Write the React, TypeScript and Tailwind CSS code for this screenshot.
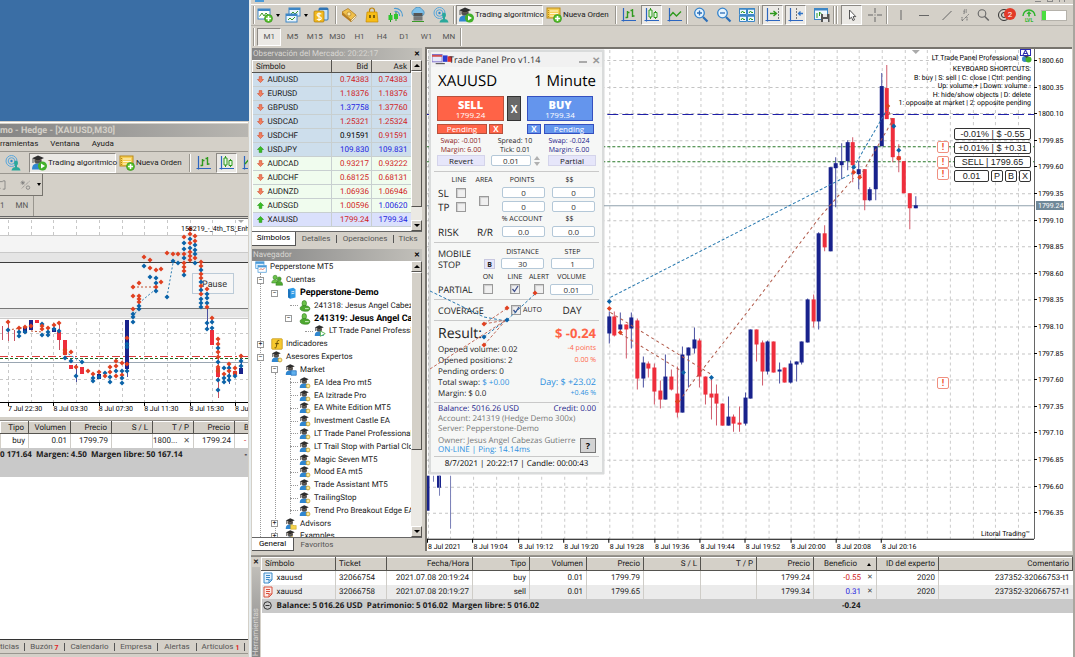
import type { ReactNode } from 'react'
import clsx from 'clsx'

type Candle = [top: number, bottom: number, high: number, low: number, up: 0 | 1]

const MAIN_CANDLES: Candle[] = [
  [316, 333, 311, 343, 1], [316, 335, 311, 336, 0], [324, 329, 312, 330, 1], [324, 329, 324, 358, 0],
  [317, 328, 312, 348, 1], [320, 378, 318, 389, 0], [362, 378, 356, 387, 1], [363, 368, 361, 377, 0],
  [367, 391, 363, 404, 0], [390, 399, 380, 408, 0], [376, 399, 354, 399, 1], [376, 389, 369, 390, 0],
  [393, 412, 366, 417, 0], [354, 412, 346, 412, 1], [347, 355, 347, 387, 1], [339, 348, 327, 353, 1],
  [340, 376, 338, 387, 0], [376, 394, 376, 404, 0], [393, 397, 378, 419, 0], [393, 403, 384, 425, 0],
  [403, 425, 403, 425, 0], [416, 425, 396, 425, 1], [416, 423, 414, 431, 0], [422, 424, 406, 431, 0],
  [397, 423, 392, 425, 1], [329, 398, 329, 398, 1], [329, 344, 329, 361, 0], [342, 371, 340, 385, 0],
  [341, 371, 340, 374, 1], [341, 372, 341, 372, 0], [369, 371, 362, 383, 1], [367, 382, 367, 382, 0],
  [363, 382, 360, 383, 1], [361, 364, 361, 381, 1], [341, 362, 341, 364, 1], [299, 342, 298, 342, 1],
  [299, 321, 294, 327, 0], [233, 321, 232, 329, 1], [233, 247, 225, 251, 0], [167, 251, 167, 251, 1],
  [163, 168, 157, 207, 1], [161, 165, 143, 179, 1], [142, 161, 140, 170, 1], [142, 165, 137, 182, 0],
  [169, 174, 161, 189, 1], [169, 200, 169, 210, 0], [189, 200, 187, 201, 1], [146, 189, 146, 200, 1],
  [86, 146, 73, 146, 1], [88, 119, 65, 119, 0], [118, 157, 118, 162, 0], [156, 160, 144, 172, 0],
  [161, 193, 161, 193, 0], [193, 208, 193, 229, 0], [205, 208, 196, 208, 1],
]

// [x, y, 'r' | 'b']
type Mark = [number, number, string]

const MAIN_MARKS: Mark[] = [
  [610, 301, 'b'], [610, 308, 'r'], [621, 332, 'r'], [684, 372, 'b'], [712, 377, 'b'], [678, 401, 'r'],
  [854, 167, 'b'], [854, 172, 'r'], [860, 177, 'r'], [888, 106, 'r'], [894, 126, 'b'], [899, 150, 'b'], [899, 158, 'r'],
]

// column x, then "<colour><y>" marks
const BACK_MARKS: [number, string][] = [
  [8, 'r322 b330'], [19, 'r328 b332 b336'], [25, 'r327 b332'], [31, 'r326'], [42, 'b324 r329 b335 r326'],
  [48, 'r328 b332 b335'], [54, 'r325 b329'], [59, 'r323 b331'], [65, 'r350 b358 r353'], [71, 'r352 b361'],
  [76, 'r367 b376'], [82, 'b362'], [88, 'r371'], [93, 'r374 b378 b381'], [99, 'r372 b377'], [105, 'b373 r376'],
  [110, 'r367 r372 b377 b382'], [116, 'r361 r366 b371 r376'], [122, 'r363 b371 r375 b378 b383'],
  [127, 'r338 b344 b347 r364 b371'], [133, 'r287 r296 r309 b314 b317 b322'],
  [139, 'r283 r296 r299 r302 b306 b309'], [144, 'r257 b266'], [150, 'r260 r268 b277'],
  [156, 'r270 b278 b283 r287 b291'], [161, 'r269 r282'], [167, 'r253 b297'], [173, 'r254 b261'], [178, 'r254 b263'],
  [184, 'r237 b243 b249 r254 b258 r263 r267 r271 b275'],
  [190, 'r229 r234 b239 r243 b248 r252 r256 r260'],
  [195, 'r236 r241 b245 b250 b254 r258 b263'],
  [201, 'r262 r266 b270 r274 r278 b282 r286 b290 r294 b299 b303 b307'],
  [207, 'r289 b294 b298 b303 r307 b323 b329'], [212, 'r318 b322 b328'],
  [218, 'r339 r344 b348 r352 r357 b362 r367 r371 b380 b390'], [224, 'b368 r374 b378 b382'],
  [229, 'r364 b368 r371 b376 b380'], [235, 'r368 r373 b376'], [241, 'r356 b361 b366'],
]

const BACK_BODIES: [number, number, number, 0 | 1][] = [
  [25, 327, 333, 1], [31, 320, 330, 1], [37, 320, 323, 0], [54, 328, 332, 1], [59, 332, 340, 0], [65, 340, 355, 0],
  [71, 365, 369, 0], [82, 367, 374, 0], [99, 374, 379, 1], [127, 320, 369, 1], [212, 330, 345, 0],
  [218, 368, 377, 0], [235, 371, 375, 0], [241, 368, 374, 1],
]

const BACK_WICKS: [number, number, number, 0 | 1][] = [
  [2, 326, 340, 0], [8, 320, 341, 0], [14, 330, 341, 0], [59, 322, 350, 0], [76, 364, 382, 1], [127, 320, 377, 1],
  [207, 306, 328, 1], [218, 338, 398, 0], [229, 363, 384, 1], [241, 354, 374, 1],
]

const QUOTES = [
  ['AUDUSD', '0.74383', '0.74383', 'd', 'r', 'r'],
  ['EURUSD', '1.18376', '1.18376', 'd', 'r', 'r'],
  ['GBPUSD', '1.37758', '1.37760', 'd', 'b', 'r'],
  ['USDCAD', '1.25321', '1.25324', 'd', 'r', 'r'],
  ['USDCHF', '0.91591', '0.91591', 'd', 'k', 'r'],
  ['USDJPY', '109.830', '109.831', 'u', 'b', 'b'],
  ['AUDCAD', '0.93217', '0.93222', 'd', 'r', 'r'],
  ['AUDCHF', '0.68125', '0.68131', 'd', 'r', 'r'],
  ['AUDNZD', '1.06936', '1.06946', 'd', 'r', 'r'],
  ['AUDSGD', '1.00596', '1.00620', 'u', 'r', 'b'],
  ['XAUUSD', '1799.24', '1799.34', 'u', 'r', 'b'],
]

const QUOTE_COLOR: Record<string, string> = {
  r: 'text-[#d01c24]',
  b: 'text-[#1c24e0]',
  k: 'text-black',
}

type TreeItem = { label: string; depth: number; icon: string; box?: '+' | '-'; bold?: boolean }

const TREE: TreeItem[] = [
  { label: 'Pepperstone MT5', depth: 0, icon: 'app' },
  { label: 'Cuentas', depth: 1, icon: 'users', box: '-' },
  { label: 'Pepperstone-Demo', depth: 2, icon: 'server', box: '-', bold: true },
  { label: '241318: Jesus Angel Cabezas', depth: 3, icon: 'user' },
  { label: '241319: Jesus Angel Cabezas', depth: 3, icon: 'user', box: '-', bold: true },
  { label: 'LT Trade Panel Professional', depth: 4, icon: 'expertRun' },
  { label: 'Indicadores', depth: 1, icon: 'fx', box: '+' },
  { label: 'Asesores Expertos', depth: 1, icon: 'expert', box: '-' },
  { label: 'Market', depth: 2, icon: 'expertBag', box: '-' },
  { label: 'EA Idea Pro mt5', depth: 3, icon: 'expert' },
  { label: 'EA Izitrade Pro', depth: 3, icon: 'expert' },
  { label: 'EA White Edition MT5', depth: 3, icon: 'expert' },
  { label: 'Investment Castle EA', depth: 3, icon: 'expert' },
  { label: 'LT Trade Panel Professional', depth: 3, icon: 'expert' },
  { label: 'LT Trail Stop with Partial Close', depth: 3, icon: 'expert' },
  { label: 'Magic Seven MT5', depth: 3, icon: 'expert' },
  { label: 'Mood EA mt5', depth: 3, icon: 'expert' },
  { label: 'Trade Assistant MT5', depth: 3, icon: 'expert' },
  { label: 'TrailingStop', depth: 3, icon: 'expert' },
  { label: 'Trend Pro Breakout Edge EA', depth: 3, icon: 'expert' },
  { label: 'Advisors', depth: 2, icon: 'expertFolder', box: '+' },
  { label: 'Examples', depth: 2, icon: 'expertFolder', box: '+' },
]

const DEPTH_PAD = ['pl-[3px]', 'pl-[5px]', 'pl-[19px]', 'pl-[33px]', 'pl-[48px]']

const TIMEFRAMES = ['M1', 'M5', 'M15', 'M30', 'H1', 'H4', 'D1', 'W1', 'MN']
const PRICES = Array.from({ length: 18 }, (_, i) => (1800.6 - i * 0.25).toFixed(2))
const TIMES = [
  '8 Jul 2021', '8 Jul 19:04', '8 Jul 19:12', '8 Jul 19:20', '8 Jul 19:28', '8 Jul 19:36',
  '8 Jul 19:44', '8 Jul 19:52', '8 Jul 20:00', '8 Jul 20:08', '8 Jul 20:16',
]

const RAISED = 'border-r border-b border-r-[#55534f] border-b-[#55534f] border-t border-l border-t-white border-l-white bg-[#d4d0c8]'
const PRESSED = 'border border-[#8c8984] border-r-white border-b-white bg-[#ebe9e5]'

/* ---------- icons ---------- */

function Expert({ badge }: { badge?: ReactNode }) {
  return (
    <>
      <circle cx="7" cy="6" r="3.4" fill="#b08868" />
      <path d="M1 14.500c0-4.500 2-6 6-6s6 1.500 6 6z" fill="#2f86d0" />
      <path d="M1 3.200 7 .4l6 2.600-6 2.800z" fill="#2e2e2e" />
      <path d="M3.500 4.300v3c2 1.200 5 1.200 7 0v-3L7 6z" fill="#505050" />
      <path d="M2 4v4" stroke="#2e2e2e" strokeWidth=".8" />
      {badge}
    </>
  )
}

const ICONS: Record<string, ReactNode> = {
  newChart: (
    <>
      <rect x="1" y="2" width="12" height="10" fill="#fff" stroke="#3d86c6" />
      <path d="M1 2h12v2H1z" fill="#3d86c6" />
      <path d="M2.500 9.500 5 6l2 3 2-3 2 2" fill="none" stroke="#3a9a28" />
      <circle cx="11.500" cy="11.500" r="4" fill="#57c02c" stroke="#2f8a16" strokeWidth=".6" />
      <path d="M11.500 9v5M9 11.500h5" stroke="#fff" strokeWidth="1.600" />
    </>
  ),
  profiles: (
    <>
      <rect x="4" y="1" width="11" height="8" fill="#eaf5fd" stroke="#3d86c6" />
      <path d="M4 1h11v2H4z" fill="#3d86c6" />
      <path d="m6 7 2-2 2 2 3-3" fill="none" stroke="#3a9a28" />
      <rect x="1" y="7" width="11" height="8" fill="#eaf5fd" stroke="#3d86c6" />
      <path d="M1 7h11v2H1z" fill="#3d86c6" />
      <path d="m3 13 2-2 2 2 3-3" fill="none" stroke="#3a9a28" />
    </>
  ),
  money: (
    <>
      <rect x="6" y="1" width="9" height="12" rx="1" fill="#c4e2f8" stroke="#2f74b5" />
      <path d="M6 1h9v2H6z" fill="#2f74b5" />
      <rect x="1" y="4" width="10" height="11" rx="1" fill="#f1b91f" stroke="#a9780c" strokeWidth=".7" />
      <path d="M8.300 7.300C7.500 6.200 4 6.200 4 8s4.300 1.400 4.300 3.300S4.600 13 3.800 12M6 5.500v8.500" fill="none" stroke="#fff" strokeWidth="1.100" />
    </>
  ),
  book: (
    <>
      <path d="m1 5 6-3.500L15 8l-5 5z" fill="#f0c04a" stroke="#a3701a" strokeWidth=".7" />
      <path d="m1 5v3l9 7v-2z" fill="#b97d1e" />
      <path d="m10 13 5-5v2l-5 5z" fill="#fff3cf" stroke="#a3701a" strokeWidth=".5" />
      <circle cx="8" cy="7" r="2" fill="#fbe7a6" stroke="#a3701a" strokeWidth=".6" />
    </>
  ),
  bag: (
    <>
      <path d="M5.500 6V3.500a2.500 2.500 0 0 1 5 0V6" fill="none" stroke="#bd8407" strokeWidth="1.200" />
      <path d="M3 5h10l1 10H2z" fill="#f7bd16" stroke="#c58b08" strokeWidth=".7" />
      <path d="M6 8v3M10 8v3" stroke="#4b3a08" strokeWidth="1.400" />
    </>
  ),
  signals: (
    <>
      <path d="M3.500 6v9M9 5v9" stroke="#1c9a1c" />
      <rect x="1.500" y="8" width="4" height="5" fill="#2fc52f" />
      <rect x="7" y="7" width="4" height="5" fill="#2fc52f" />
      <path d="M7.500 4.500a4 4 0 0 1 5 4.500M7 1.500a7 7 0 0 1 8.300 8" fill="none" stroke="#4d9bd0" strokeWidth="1.100" />
    </>
  ),
  vps: (
    <>
      <path d="M4 9a3.500 3.500 0 0 1 0-6.500 4.500 4.500 0 0 1 8 0A3.500 3.500 0 0 1 12 9z" fill="#7cc0ea" stroke="#3d86b6" strokeWidth=".7" />
      <rect x="3.500" y="6" width="9" height="3.500" fill="#555" />
      <rect x="3.500" y="10" width="9" height="3.500" fill="#777" />
      <path d="M2 14.500h12" stroke="#3a9a28" />
    </>
  ),
  cast: (
    <>
      <circle cx="6.500" cy="6" r="5.500" fill="none" stroke="#58a6dc" />
      <circle cx="6.500" cy="6" r="3.300" fill="none" stroke="#58a6dc" />
      <circle cx="6.500" cy="6" r="1.200" fill="#2f86c8" />
      <ellipse cx="11" cy="8" rx="2" ry="2.600" fill="#2aa89b" />
      <path d="M6.500 15.500c.3-2.500 2-3.500 4.500-3.500s4.200 1 4.500 3.500z" fill="#2aa89b" />
      <path d="M10 10h2v3h-2z" fill="#2aa89b" />
    </>
  ),
  expertRun: <Expert badge={<path d="M8.500 8 15 11.500 8.500 15z" fill="#fff" stroke="#3aa52a" />} />,
  expertPlay: (
    <Expert
      badge={
        <>
          <circle cx="11.500" cy="11" r="4.500" fill="#43b02a" />
          <path d="m10 8.500 4 2.500-4 2.500z" fill="#fff" />
        </>
      }
    />
  ),
  expert: <Expert badge={<circle cx="12" cy="12" r="2.600" fill="#fbe99a" stroke="#c59a1d" />} />,
  expertBag: <Expert badge={<path d="M8 9h7v6H8z" fill="#5fb0ee" stroke="#2a6fb8" />} />,
  expertFolder: <Expert badge={<path d="M7.500 9h3l1 1H15v5H7.500z" fill="#f7d34a" stroke="#c39a18" strokeWidth=".6" />} />,
  order: (
    <>
      <rect x="1" y="1" width="13" height="10" fill="#f7cf55" stroke="#b98a18" />
      <path d="M4 4h8M4 6.500h8M4 9h5" stroke="#fff7d8" />
      <path d="M2.500 3v7" stroke="#b98a18" strokeDasharray="1 1" />
      <circle cx="11.500" cy="11.500" r="4" fill="#57c02c" stroke="#2f8a16" strokeWidth=".6" />
      <path d="M11.500 9v5M9 11.500h5" stroke="#fff" strokeWidth="1.600" />
    </>
  ),
  bars: (
    <>
      <path d="M2.500 1v13.500M.5 13.500H15" stroke="#2c66c0" strokeWidth="1.200" />
      <path d="M6.500 4v7M4.500 10.500h2M6.500 5.500h2M11.500 2v8M9.500 3.500h2M11.500 9h2" stroke="#2f9a1e" strokeWidth="1.400" />
    </>
  ),
  candles: (
    <>
      <path d="M2.500 1v13.500M.5 13.500H15" stroke="#2c66c0" strokeWidth="1.200" />
      <path d="M6.500 1v11M11.500 4v8" stroke="#2f9a1e" />
      <path d="M5 3h3v7H5zM10 5.500h3v5h-3z" fill="#e9fbe4" stroke="#2f9a1e" />
    </>
  ),
  line: (
    <>
      <path d="M2.500 1v13.500M.5 13.500H15" stroke="#2c66c0" strokeWidth="1.200" />
      <path d="m3 9 3-3.500L9.500 9 14 4.500" fill="none" stroke="#2f9a1e" strokeWidth="1.400" />
    </>
  ),
  zoomIn: (
    <>
      <path d="m10 10 4.500 4.500" stroke="#2d6fb8" strokeWidth="2.200" />
      <circle cx="6.500" cy="6" r="4.800" fill="#e6f4fe" stroke="#3583cc" strokeWidth="1.300" />
      <path d="M6.500 3.500v5M4 6h5" stroke="#2d6fb8" strokeWidth="1.300" />
    </>
  ),
  zoomOut: (
    <>
      <path d="m10 10 4.500 4.500" stroke="#2d6fb8" strokeWidth="2.200" />
      <circle cx="6.500" cy="6" r="4.800" fill="#e6f4fe" stroke="#3583cc" strokeWidth="1.300" />
      <path d="M4 6h5" stroke="#2d6fb8" strokeWidth="1.300" />
    </>
  ),
  tile: (
    <>
      <path d="M.5 1.500h7v6h-7zM8.500 1.500h7v6h-7zM.5 8.500h7v6h-7zM8.500 8.500h7v6h-7z" fill="#eef8ff" stroke="#3d86c6" />
      <path d="M0 2h16M0 9h16" stroke="#3d86c6" strokeWidth="1.400" />
      <path d="m2 6 1.500-2L5 6l1-1M10 6l1.500-2L13 6l1-1M2 13l1.500-2L5 13l1-1M10 13l1.500-2 1.500 2 1-1" fill="none" stroke="#2f9a1e" />
    </>
  ),
  autoScroll: (
    <>
      <path d="M2.500 1v13.500M.5 13.500H15" stroke="#2c66c0" strokeWidth="1.200" />
      <path d="M13.500 1v11" stroke="#777" strokeDasharray="2 1" />
      <path d="M5 6.500h6M8.500 4l3 2.500-3 2.500" fill="none" stroke="#2f9a1e" strokeWidth="1.400" />
    </>
  ),
  shift: (
    <>
      <path d="M2.500 1v13.500M.5 13.500H15" stroke="#2c66c0" strokeWidth="1.200" />
      <path d="M8.500 1v11" stroke="#777" strokeDasharray="2 1" />
      <path d="M15 6.500h-4M12.500 4.500l-2 2 2 2" fill="none" stroke="#2f74c8" strokeWidth="1.300" />
    </>
  ),
  template: (
    <>
      <rect x=".5" y="1.500" width="13" height="11" fill="#eef8ff" stroke="#3d86c6" />
      <path d="M0 2.500h14" stroke="#3d86c6" strokeWidth="2" />
      <path d="M3 11V6M5.500 9V5l2 2" fill="none" stroke="#2f9a1e" />
      <rect x="7" y="7" width="8.500" height="8" fill="#555" />
      <path d="M9 7h4v3H9zM9 12h5v3H9z" fill="#e5e5e5" />
    </>
  ),
  cursor: <path d="M5.500 3v9l2-1.800 1.400 3.300 1.600-.7-1.400-3.200h2.700z" fill="#fff" stroke="#444" strokeWidth=".9" />,
  cross: <path d="M8 1v5M8 10v5M1 8h5M10 8h5M7.500 8h1" stroke="#666" />,
  vline: <path d="M8 3v10" stroke="#666" />,
  hline: <path d="M3 8.500h10" stroke="#666" />,
  trend: <path d="m3.500 13 9-9" stroke="#666" />,
  fibo: <path d="M6 7V3h3M6 5h3M4 14l7-7M4 10v4M9 10v4" fill="none" stroke="#777" strokeDasharray="1.500 .5" />,
  search: (
    <>
      <circle cx="7" cy="6.500" r="3.800" fill="none" stroke="#666" strokeWidth="1.100" />
      <path d="m9.800 9.500 4 4" stroke="#666" strokeWidth="1.500" />
    </>
  ),
  shapes: (
    <>
      <path d="M5 2v6M2 5h6M3 3l4 4M7 3 3 7" stroke="#777" strokeWidth=".9" />
      <path d="M14 3 3 13" stroke="#777" strokeDasharray="1.500 1" />
      <circle cx="12" cy="11.500" r="2.300" fill="none" stroke="#777" />
    </>
  ),
  text: <path d="M0 3.500h9M4.500 3.500v9M3 12.500h3M12 2.500v11M9 2.500h3M9 13.500h3" fill="none" stroke="#777" />,
  app: (
    <>
      <rect x="1" y="1" width="11" height="9" fill="#e4f2fd" stroke="#4a9ad8" />
      <path d="M1 2.500h11" stroke="#4a9ad8" strokeWidth="2.500" />
      <rect x="4" y="6" width="11" height="9" fill="#fff" stroke="#4a9ad8" />
      <path d="m6 12 2-2 2 2 3-3" fill="none" stroke="#d8503c" />
      <path d="M4 7.500h11" stroke="#4a9ad8" strokeWidth="2" />
    </>
  ),
  users: (
    <>
      <circle cx="5.500" cy="4.500" r="2.800" fill="#6cc24a" stroke="#2f7d1c" strokeWidth=".7" />
      <path d="M1 12c0-3 2-4.500 4.500-4.500S10 9 10 12z" fill="#6cc24a" stroke="#2f7d1c" strokeWidth=".7" />
      <circle cx="11" cy="6.500" r="2.600" fill="#4da82f" stroke="#2f7d1c" strokeWidth=".7" />
      <path d="M6.500 15c0-4 2-5.500 4.500-5.500s4.500 1.500 4.500 5.500z" fill="#4da82f" stroke="#2f7d1c" strokeWidth=".7" />
    </>
  ),
  user: (
    <>
      <ellipse cx="7" cy="4.500" rx="3" ry="3.800" fill="#6cc24a" stroke="#2f7d1c" strokeWidth=".8" />
      <path d="M1.500 11c0-2.500 2.500-3.500 5.500-3.500 4 0 7.500 1 7.500 4s-3 3.500-6.500 3.500-6.500-1-6.500-4z" fill="#4da82f" stroke="#2f7d1c" strokeWidth=".8" />
      <path d="M8 11.500h5" stroke="#d8f5cc" strokeWidth="1.200" />
    </>
  ),
  server: (
    <>
      <path d="M4 2.500 11 1l3 2v11l-7 1.500-3-2z" fill="#2f9be6" />
      <path d="M4 2.500 7 4.500V15.500l-3-2z" fill="#1c74bd" />
      <path d="M8.500 6.500l4-.8M8.500 9l4-.8" stroke="#fff" />
    </>
  ),
  fx: (
    <>
      <rect x="1" y="1" width="14" height="14" rx="1" fill="#f7c92f" stroke="#c39416" />
      <path d="M11 3.500c-2-.8-2.600.5-2.900 2.500l-.8 5c-.3 2-1 2.500-2.500 2M5.500 7.500h5" fill="none" stroke="#5a4305" strokeWidth="1.200" />
    </>
  ),
}

function Icon({ name, size = 16, className }: { name: string; size?: number; className?: string }) {
  return (
    <svg viewBox="0 0 16 16" width={size} height={size} className={clsx('shrink-0', className)} aria-hidden="true">
      {ICONS[name]}
    </svg>
  )
}

function Arrow({ up }: { up: boolean }) {
  return (
    <svg viewBox="0 0 8 8" className="size-[7px] shrink-0" aria-hidden="true">
      {up ? (
        <path d="M4 .5 7.500 4H5.500v3.300h-3V4H.5z" fill="#35c020" stroke="#1c8a0e" strokeWidth=".6" />
      ) : (
        <path d="M4 7.500.5 4h2V.7h3V4h2z" fill="#f08060" stroke="#d04020" strokeWidth=".6" />
      )}
    </svg>
  )
}

/* ---------- toolbar parts ---------- */

function Tool({ name, label, pressed }: { name: string; label: string; pressed?: boolean }) {
  return (
    <button
      type="button"
      aria-label={label}
      className={clsx('mx-px flex h-[20px] w-[21px] shrink-0 items-center justify-center', pressed && PRESSED)}
    >
      <Icon name={name} />
    </button>
  )
}

function Sep({ className }: { className?: string }) {
  return <span className={clsx('h-[18px] w-[2px] shrink-0 border-l border-r border-l-[#99968f] border-r-white', className)} />
}

function Caret() {
  return <span className="mx-[3px] border-x-2 border-t-[3px] border-x-transparent border-t-black" />
}

function AlgoButton() {
  return (
    <button type="button" className={clsx('flex h-[20px] w-[87px] shrink-0 items-center gap-px pl-px whitespace-nowrap', PRESSED)}>
      <Icon name="expertPlay" />
      Trading algorítmico
    </button>
  )
}

function OrderButton() {
  return (
    <button type="button" className="flex h-[20px] w-[68px] shrink-0 items-center gap-px pl-[3px] whitespace-nowrap">
      <Icon name="order" />
      Nueva Orden
    </button>
  )
}

/* ---------- charts ---------- */

function Marks({ items }: { items: Mark[] }) {
  return (
    <g>
      {items.map(([x, y, c], i) => (
        <path
          key={i}
          d={`M${x} ${y - 2.5}l2.500 2.500-2.500 2.500-2.500-2.500z`}
          fill={c === 'r' ? '#e04020' : '#0a62a8'}
        />
      ))}
    </g>
  )
}

function BackChart() {
  const marks = BACK_MARKS.flatMap(([x, s]) => s.split(' ').map((m): Mark => [x, Number(m.slice(1)), m[0]]))
  const gridX = Array.from({ length: 11 }, (_, i) => Math.round(8 + i * 22.7) + 0.5)
  return (
    <svg viewBox="0 219 248 198" preserveAspectRatio="xMinYMin slice" className="block h-[198px] w-full shrink-0 bg-white font-['Roboto',sans-serif]">
      {gridX.map((x) => (
        <path key={x} d={`M${x} 220V402`} stroke="#c8c8c8" strokeDasharray="3 3" />
      ))}
      <path d="M0 333.500h248M0 379.500h248" stroke="#c8c8c8" strokeDasharray="3 3" />
      <rect y="235" width="248" height="83" fill="#f4f4f4" />
      <rect y="252" width="248" height="10" fill="#e5e5e5" />
      <rect y="309" width="248" height="8" fill="#e5e5e5" />
      <path d="M0 235.500h248M0 252.500h248M0 318.500h248" stroke="#c9c9c9" />
      <path d="M0 262.500h248" stroke="#3c3c3c" />
      <path d="M0 308.500h248" stroke="#777" />
      <path d="M0 362.500h248" stroke="#9aa6b2" />
      <path d="M0 356.500h248" stroke="#d83a3a" strokeDasharray="8 3 2 3" />
      <path d="M0 358.500h248" stroke="#1a6a1a" strokeDasharray="3 2" />
      <path d="M133 287h23M8 330l20-3M31 331l11 1" stroke="#c05030" strokeDasharray="2 2" />
      <path d="M167 297l6-34M139 303l17-14M133 317l6-10M65 352l17 10" stroke="#2a7ab0" strokeDasharray="2 2" fill="none" />
      {BACK_WICKS.map(([x, a, b, up], i) => (
        <path key={i} d={`M${x}.500 ${a}V${b}`} stroke={up ? '#4a50a0' : '#c85060'} />
      ))}
      {BACK_BODIES.map(([x, a, b, up], i) => (
        <rect key={i} x={x - 2} y={a} width="4" height={b - a} fill={up ? '#18228c' : '#ee2e3c'} />
      ))}
      <rect x="192.500" y="273.500" width="41" height="20" fill="#f6f6f6" stroke="#bccbd8" />
      <text x="202" y="287" fontSize="9" fill="#333">Pause</text>
      <Marks items={marks} />
      <text x="181" y="231" fontSize="7">158219_-_4th_TS_Enh</text>
      <path d="M238 220h6l-3 3z" fill="#aaa" />
      <path d="M0 402.500h248" stroke="#000" />
      {['7 Jul 22:30', '8 Jul 03:30', '8 Jul 07:30', '8 Jul 11:30', '8 Jul 15:30', '8 Jul 19:30'].map((t, i) => (
        <g key={t}>
          <path d={`M${Math.round(8 + i * 45.4)}.500 402v4`} stroke="#000" />
          <text x={8 + i * 45.4} y="411" fontSize="7">{t}</text>
        </g>
      ))}
    </svg>
  )
}

function MainChart() {
  const gridX = Array.from({ length: 27 }, (_, i) => 428.7 + i * 22.667)
  return (
    <svg viewBox="428 49 606 502" preserveAspectRatio="xMinYMin slice" className="block h-full min-w-0 flex-1 font-['Roboto',sans-serif]">
      {gridX.map((x) => (
        <path key={x} d={`M${x.toFixed(0)}.500 50V538`} stroke="#cbcbcb" strokeDasharray="3 3" />
      ))}
      {PRICES.map((p, i) => (
        <path key={p} d={`M428 ${Math.round(60 + i * 26.6)}.500H1034`} stroke="#c4c4c4" strokeDasharray="3 3" />
      ))}
      <path d="M428 114.500H1034" stroke="#2020a8" strokeDasharray="11 4" />
      <path d="M428 146.500H1034M428 161.500H1034" stroke="#2a7a2a" strokeDasharray="3 2" />
      <path d="M428 205.500H1034" stroke="#8fa0ac" />
      <path d="M428.500 475v35" stroke="#18228c" strokeWidth="4" />
      <path d="M440 475v12" stroke="#18228c" strokeWidth="4" />
      <path d="M434.500 475v6M440.500 475v20M451.500 475v53" stroke="#7a80b8" />
      {MAIN_CANDLES.map(([a, b, hi, lo, up], i) => {
        const x = Math.round(609.8 + i * 5.667)
        return (
          <g key={i}>
            <path d={`M${x} ${hi}V${lo}`} stroke={up ? '#4a50a0' : '#d05a6a'} />
            <rect x={x - 2} y={a} width="4" height={b - a} fill={up ? '#18228c' : '#ee2e3c'} />
          </g>
        )
      })}
      <path d="M611 297 853 173M854 167l33-57" stroke="#2a7ab0" strokeDasharray="3 2" fill="none" />
      <path d="M680 401l9-14 74-95 57-75 34-39M860 177l33-57M611 312l101 62M621 333l62 38M888 106l5 20" stroke="#b05a4a" strokeDasharray="3 3" fill="none" />
      <Marks items={MAIN_MARKS} />
      <path d="M912 50h8l-4 4z" fill="#aaa" />
      <g fontSize="7" textAnchor="end">
        <text x="1018" y="60">LT Trade Panel Professional</text>
        <text x="1031" y="71">KEYBOARD SHORTCUTS:</text>
        <text x="1031" y="80">B: buy | S: sell | C: close | Ctrl: pending</text>
        <text x="1031" y="88">Up: volume + | Down: volume -</text>
        <text x="1031" y="97">H: hide/show objects | D: delete</text>
        <text x="1031" y="105">1: opposite at market | 2: opposite pending</text>
        <text x="1030" y="535">Litoral Trading™</text>
      </g>
      <rect x="1020.500" y="49.500" width="10" height="6" fill="#fff" stroke="#2a2ab0" />
      <path d="m1023 55 2.500-5 2.500 5M1024 53.500h3" stroke="#2a2ab0" fill="none" />
      <circle cx="1025" cy="59" r="3" fill="#3a86c8" />
      <circle cx="1028.500" cy="59.500" r="3" fill="#43b02a" />
      <path d="M1024 56h5l-2.500 2z" fill="#444" />
      <path d="M428 538.500H1034" stroke="#000" />
      {TIMES.map((t, i) => (
        <g key={t}>
          <path d={`M${Math.round(428 + i * 45.333)}.500 538v4`} stroke="#000" />
          <text x={429 + i * 45.333} y="548" fontSize="7">{t}</text>
        </g>
      ))}
    </svg>
  )
}

function PriceAxis() {
  return (
    <svg viewBox="1034 49 38 502" preserveAspectRatio="xMinYMin slice" className="block h-full w-[38px] shrink-0 font-['Roboto',sans-serif]">
      <path d="M1034.500 49V539" stroke="#666" />
      {PRICES.map((p, i) => (
        <g key={p}>
          <path d={`M1034 ${Math.round(60 + i * 26.6)}.500h3`} stroke="#000" />
          <text x="1038" y={Math.round(63 + i * 26.6)} fontSize="7">{p}</text>
        </g>
      ))}
      <rect x="1036" y="201" width="28" height="9" fill="#708898" />
      <text x="1038" y="208" fontSize="7" fill="#fff">1799.24</text>
    </svg>
  )
}

/* ---------- trade panel ---------- */

function Field({ label, value }: { label: string; value: string }) {
  return (
    <input
      aria-label={label}
      defaultValue={value}
      className="block h-[11px] w-full min-w-0 rounded-[2px] border border-[#b4c8d8] bg-white p-0 text-center text-[8px] leading-none text-[#333]"
    />
  )
}

function Check({ label, checked }: { label: string; checked?: boolean }) {
  return (
    <span className="relative block size-[10px]">
      <input
        type="checkbox"
        aria-label={label}
        defaultChecked={checked}
        className="peer block size-[10px] appearance-none border border-[#9a9a9a] bg-[#f0f0f0] shadow-[inset_1px_1px_1px_#ccc]"
      />
      <svg viewBox="0 0 10 10" className="pointer-events-none absolute inset-0 hidden peer-checked:block" aria-hidden="true">
        <path d="m2.500 5 2 2.500 3.500-5.500" fill="none" stroke="#40508c" strokeWidth="1.300" />
      </svg>
    </span>
  )
}

function Rule() {
  return <hr className="-mx-[3px] border-t border-[#c9c9c9]" />
}

function TradePanel() {
  return (
    <section className="absolute top-px left-[2px] w-[175px] border-2 border-[#d9dbdb] bg-[#f6f7f6] font-['Open_Sans','Noto_Sans',sans-serif] text-[8px] leading-none whitespace-nowrap text-[#222] shadow-[0_0_1px_#888]">
      <header className="flex h-[15px] items-center bg-[#f1f1f1] pr-[2px] pl-px">
        <svg viewBox="0 0 24 12" className="h-[12px] w-[22px] shrink-0" aria-hidden="true">
          <rect x="0" y="0" width="11" height="8" fill="#e8e8f8" stroke="#7a6ac8" />
          <path d="M0 1.500h11" stroke="#d05050" strokeWidth="2" />
          <path d="M12 1h5v7h-5z" fill="#2a3ad0" />
          <path d="M17 2h5v6h-5z" fill="#e03030" />
          <path d="M4 10h10" stroke="#333" />
        </svg>
        <h2 className="-ml-[5px] text-[9px] text-[#333]">Trade Panel Pro v1.14</h2>
        <button type="button" aria-label="Minimizar" className="mt-[5px] ml-auto h-[2px] w-[8px] bg-[#aaa]" />
        <button type="button" aria-label="Cerrar" className="ml-[5px] text-[10px] font-bold text-[#999]">✕</button>
      </header>

      <div className="px-[6px]">
        <div className="flex h-[29px] items-center justify-between pb-px pl-px text-[15px] text-black">
          <span>XAUUSD</span>
          <span>1 Minute</span>
        </div>

        <div className="flex h-[25px] text-white">
          <button type="button" className="flex w-[67px] flex-col items-center justify-center border border-[#b8503c] bg-[#ff6347]">
            <b className="text-[11px] leading-[11px] font-extrabold">SELL</b>
            <span className="leading-[9px]">1799.24</span>
          </button>
          <button type="button" aria-label="Cerrar todo" className="mr-[6px] ml-[3px] w-[14px] border border-[#333] bg-[#696969] text-[10px] font-bold">X</button>
          <button type="button" className="flex w-[66px] flex-col items-center justify-center border border-[#3450c0] bg-[#6495ed]">
            <b className="text-[11px] leading-[11px] font-extrabold">BUY</b>
            <span className="leading-[9px]">1799.34</span>
          </button>
        </div>

        <div className="mt-[3px] flex h-[10px] leading-[8px] text-white">
          <button type="button" className="w-[50px] border border-[#b8503c] bg-[#ff6347]">Pending</button>
          <button type="button" className="ml-[2px] w-[14px] border border-[#b8503c] bg-[#ff6347] font-bold">X</button>
          <button type="button" className="ml-[24px] w-[14px] border border-[#3450c0] bg-[#6495ed] font-bold">X</button>
          <button type="button" className="ml-[3px] w-[50px] border border-[#3450c0] bg-[#6495ed]">Pending</button>
        </div>

        <div className="mt-[3px] grid grid-cols-[48px_60px_48px] text-center text-[7px] leading-[9px]">
          <p className="text-[#8b1a1a]">Swap: -0.001<br />Margin: 6.00</p>
          <p>Spread: 10<br />Tick: 0.01</p>
          <p className="text-[#1a1a8b]">Swap: -0.024<br />Margin: 6.00</p>
        </div>

        <div className="flex h-[11px] items-center leading-[9px]">
          <button type="button" className="h-full w-[48px] border border-[#d4d4ea] bg-[#e6e6fa]">Revert</button>
          <div className="ml-[6px] w-[40px]"><Field label="Volume" value="0.01" /></div>
          <svg viewBox="0 0 6 10" className="ml-[3px] h-[10px] w-[6px]" aria-hidden="true">
            <path d="M0 4h6L3 0zM0 6h6L3 10z" fill="#b0b0b0" />
          </svg>
          <button type="button" className="ml-auto h-full w-[48px] border border-[#d4d4ea] bg-[#e6e6fa]">Partial</button>
        </div>

        <div className="mt-[5px]"><Rule /></div>

        <div className="relative mt-[3px]">
          <div className="grid grid-cols-[12px_20px_30px_46px_49px] text-center text-[7px] leading-[12px]">
            <span /><span>LINE</span><span>AREA</span><span>POINTS</span><span>$$</span>
          </div>
          <div className="grid grid-cols-[18px_14px_32px_43px_43px] items-center gap-y-[3px] pl-px text-[10px]">
            <span>SL</span>
            <Check label="SL line" />
            <span />
            <Field label="SL points" value="0" />
            <span className="ml-[7px] w-[43px]"><Field label="SL money" value="0" /></span>
            <span>TP</span>
            <Check label="TP line" />
            <span />
            <Field label="TP points" value="0" />
            <span className="ml-[7px] w-[43px]"><Field label="TP money" value="0" /></span>
          </div>
          <div className="absolute top-[21px] left-[42px]"><Check label="Area" /></div>
          <div className="grid grid-cols-[62px_46px_49px] pt-[2px] text-center text-[7px] leading-[12px]">
            <span /><span>% ACCOUNT</span><span>$$</span>
          </div>
          <div className="grid grid-cols-[39px_25px_43px_43px] items-center pl-px text-[10px]">
            <span>RISK</span>
            <span>R/R</span>
            <Field label="Risk percent" value="0.0" />
            <span className="ml-[7px] w-[43px]"><Field label="Risk money" value="0.0" /></span>
          </div>
        </div>

        <div className="mt-[5px]"><Rule /></div>

        <div className="mt-[4px] flex h-[24px] pl-px">
          <span className="w-[46px] pt-px text-[9px] leading-[11px]">MOBILE<br />STOP</span>
          <button type="button" className="mt-[12px] h-[10px] w-[11px] border border-[#c8c8e0] bg-[#e6e6fa] text-[7px] font-bold">B</button>
          <div className="ml-[6px] w-[43px] text-center text-[7px] leading-[11px]">
            <span>DISTANCE</span>
            <Field label="Distance" value="30" />
          </div>
          <div className="ml-[7px] w-[43px] text-center text-[7px] leading-[11px]">
            <span>STEP</span>
            <Field label="Step" value="1" />
          </div>
        </div>

        <div className="mt-px grid grid-cols-[38px_24px_30px_18px_47px] justify-items-center pl-px text-[7px] leading-[12px]">
          <span /><span>ON</span><span>LINE</span><span>ALERT</span><span>VOLUME</span>
          <span className="justify-self-start text-[9px]">PARTIAL</span>
          <Check label="Partial on" />
          <Check label="Partial line" checked />
          <Check label="Partial alert" />
          <span className="w-[43px]"><Field label="Partial volume" value="0.01" /></span>
        </div>

        <div className="mt-[3px]"><Rule /></div>
        <div className="flex h-[20px] items-center pl-px text-[9px]">
          <span className="w-[73px]">COVERAGE</span>
          <Check label="Coverage auto" checked />
          <span className="ml-[2px] text-[7px]">AUTO</span>
          <span className="ml-auto w-[48px] text-center text-[10px]">DAY</span>
        </div>
        <Rule />

        <div className="flex h-[81px] justify-between pl-px">
          <div className="leading-[11px]">
            <p className="pt-[2px] text-[14px] leading-[21px]">Result:</p>
            <p>Opened volume: 0.02</p>
            <p>Opened positions: 2</p>
            <p>Pending orders: 0</p>
            <p>Total swap: <span className="text-[#2e90e0]">$ +0.00</span></p>
            <p>Margin: $ 0.0</p>
          </div>
          <div className="text-right text-[7px] leading-[12px] text-[#ff6347]">
            <p className="pt-[2px] text-[13px] leading-[20px] font-bold">$ -0.24</p>
            <p>-4 points</p>
            <p>0.00 %</p>
            <p className="pt-[9px] text-[9px] text-[#2e90e0]">Day: $ +23.02</p>
            <p className="text-[#2e90e0]">+0.46 %</p>
          </div>
        </div>
        <Rule />

        <div className="relative h-[53px] pl-px leading-[10px] text-[#777]">
          <p className="flex justify-between pt-px text-[#1a1a8b]"><span>Balance: 5016.26 USD</span><span>Credit: 0.00</span></p>
          <p>Account: 241319 (Hedge Demo 300x)</p>
          <p>Server: Pepperstone-Demo</p>
          <p className="pt-[2px] leading-[9px]">Owner: Jesus Angel Cabezas Gutierre</p>
          <p className="leading-[9px] text-[#2e90e0]">ON-LINE | Ping: 14.14ms</p>
          <button type="button" aria-label="Ayuda" className="absolute right-0 bottom-[3px] h-[15px] w-[16px] border border-[#777] bg-[#d3d3d3] text-[9px] font-bold text-black">?</button>
        </div>
        <Rule />
        <p className="h-[15px] text-center leading-[14px] text-black">8/7/2021 | 20:22:17 | Candle: 00:00:43</p>
      </div>

      <svg viewBox="430 50 175 424" className="pointer-events-none absolute -top-[2px] -left-[2px] h-[424px] w-[175px]" aria-hidden="true">
        <path d="M431 291l54 26 22 4M508 320l29-27M485 337l22-17" stroke="#2a7ab0" strokeDasharray="3 2" fill="none" />
        <path d="M431 369l76-49M485 345l22-25M485 324l22-15M485 324l22-4" stroke="#c06a5a" strokeDasharray="3 2" fill="none" />
        <Marks items={[[485, 324, 'r'], [485, 337, 'b'], [485, 345, 'r'], [508, 308, 'r'], [508, 320, 'b'], [536, 293, 'r']]} />
      </svg>
    </section>
  )
}

function OrderTags() {
  const box = 'h-[12px] rounded-[2px] border border-[#333] bg-white text-center leading-none'
  return (
    <div className="absolute top-[79px] right-[41px] flex w-[77px] flex-col gap-[2px] font-['Liberation_Sans',Arial,sans-serif] text-[9px] text-[#222]">
      <button type="button" className={box}>-0.01% | $ -0.55</button>
      <button type="button" className={box}>+0.01% | $ +0.31</button>
      <button type="button" className={box}>SELL | 1799.65</button>
      <div className="flex justify-between">
        <button type="button" className={clsx(box, 'w-[35px]')}>0.01</button>
        <button type="button" className={clsx(box, 'w-[12px]')}>P</button>
        <button type="button" className={clsx(box, 'w-[12px]')}>B</button>
        <button type="button" className={clsx(box, 'w-[12px]')}>X</button>
      </div>
    </div>
  )
}

function Alert({ className }: { className: string }) {
  return (
    <button type="button" aria-label="Aviso" className={clsx('absolute right-[123px] h-[12px] w-[12px] rounded-[2px] border border-[#f09080] bg-white text-[9px] leading-none font-bold text-[#f04a28]', className)}>
      !
    </button>
  )
}

/* ---------- docked panels ---------- */

function DockTitle({ children }: { children: ReactNode }) {
  return (
    <header className="flex h-[12px] shrink-0 items-center justify-between bg-linear-to-r from-[#868686] to-[#c2c0ba] pr-[2px] pl-px text-[#d8d6d2]">
      <h2>{children}</h2>
      <button type="button" aria-label="Cerrar" className="text-[7px] leading-none font-bold text-black">✕</button>
    </header>
  )
}

function ScrollBar({ thumb }: { thumb: string }) {
  const btn = clsx('flex h-[11px] shrink-0 items-center justify-center', RAISED)
  return (
    <div className="flex w-[11px] shrink-0 flex-col bg-[#ebe9e4]">
      <span className={btn}><span className="border-x-[3px] border-b-[3px] border-x-transparent border-b-black" /></span>
      <span className={clsx(thumb, RAISED)} />
      <span className={clsx('mt-auto', btn)}><span className="border-x-[3px] border-t-[3px] border-x-transparent border-t-black" /></span>
    </div>
  )
}

function MarketWatch() {
  return (
    <section className="flex h-[198px] shrink-0 flex-col">
      <DockTitle>Observación del Mercado: 20:22:17</DockTitle>
      <div className="flex min-h-0 flex-1 bg-white">
        <table className="h-fit flex-1 table-fixed border-collapse">
          <thead>
            <tr className="h-[12px]">
              <th className={clsx('w-[79px] p-0 pl-[3px] text-left font-normal', RAISED)}>Símbolo</th>
              <th className={clsx('w-[40px] p-0 pr-[3px] text-right font-normal', RAISED)}>Bid</th>
              <th className={clsx('p-0 pr-[3px] text-right font-normal', RAISED)}>Ask</th>
            </tr>
          </thead>
          <tbody>
            {QUOTES.map(([symbol, bid, ask, dir, bidColor, askColor], i) => (
              <tr
                key={symbol}
                className={clsx(
                  'h-[14px] border-b border-[#c8cfd0]',
                  i < 6 ? 'bg-[#cddeec]' : i < 10 ? 'bg-[#f0fcee]' : 'bg-[#dae0fc]',
                )}
              >
                <td className="border-r border-[#c8cfd0] p-0">
                  <span className="flex items-center gap-[4px] pl-[4px]">
                    <Arrow up={dir === 'u'} />
                    {symbol}
                  </span>
                </td>
                <td className={clsx('border-r border-[#c8cfd0] p-0 pr-[2px] text-right', QUOTE_COLOR[bidColor])}>{bid}</td>
                <td className={clsx('p-0 pr-[3px] text-right', QUOTE_COLOR[askColor])}>{ask}</td>
              </tr>
            ))}
          </tbody>
        </table>
        <ScrollBar thumb="h-[136px]" />
      </div>
      <nav className="flex h-[15px] shrink-0 items-center border-t border-[#666] text-[#555]">
        <button type="button" className="-mt-px h-[14px] w-[44px] border-r border-b border-[#555] bg-white text-black">Símbolos</button>
        <button type="button" className="w-[41px] border-r border-[#555] leading-[8px]">Detalles</button>
        <button type="button" className="w-[57px] border-r border-[#555] leading-[8px]">Operaciones</button>
        <button type="button" className="flex-1 leading-[8px]">Ticks</button>
      </nav>
    </section>
  )
}

function Navigator() {
  return (
    <section className="flex min-h-0 flex-1 flex-col">
      <DockTitle>Navegador</DockTitle>
      <div className="flex min-h-0 flex-1 bg-white">
        <div className="relative min-w-0 flex-1 overflow-hidden">
          <span className="absolute top-[12px] bottom-0 left-[8px] border-l border-dotted border-[#999]" />
          <span className="absolute top-[112px] bottom-0 left-[23px] border-l border-dotted border-[#999]" />
          <span className="absolute top-[117px] left-[38px] h-[136px] border-l border-dotted border-[#999]" />
          <ul className="relative flex h-[282px] flex-col">
            {TREE.map((item, i) => (
              <li key={i} className={clsx('flex flex-1 items-center whitespace-nowrap', DEPTH_PAD[item.depth])}>
                {item.depth > 0 && (
                  <span className="flex w-[14px] shrink-0 items-center">
                    {item.box ? (
                      <span className="flex size-[7px] items-center justify-center border border-[#999] bg-white text-[7px] leading-none">
                        {item.box === '+' ? '+' : '−'}
                      </span>
                    ) : (
                      <span className="ml-[5px] w-[8px] border-t border-dotted border-[#999]" />
                    )}
                  </span>
                )}
                <Icon name={item.icon} size={12} />
                <span className={clsx('pl-[3px]', item.bold && 'text-[9px] font-bold text-black')}>{item.label}</span>
              </li>
            ))}
          </ul>
        </div>
        <ScrollBar thumb="h-[178px]" />
      </div>
      <nav className="flex h-[14px] shrink-0 items-center border-t border-[#666] text-[#555]">
        <button type="button" className="-mt-px h-[13px] w-[42px] border-r border-b border-[#555] bg-white text-black">General</button>
        <button type="button" className="w-[46px]">Favoritos</button>
      </nav>
    </section>
  )
}

function Toolbox() {
  const head = clsx('h-[13px] p-0 px-[3px] font-normal', RAISED)
  const cell = 'border-r border-[#cfcdc8] p-0 px-[3px]'
  const rows = [
    ['32066754', '2021.07.08 20:19:24', 'buy', '1799.79', '1799.24', '-0.55', '237352-32066753-t1'],
    ['32066758', '2021.07.08 20:19:27', 'sell', '1799.65', '1799.34', '0.31', '237352-32066757-t1'],
  ]
  return (
    <section className="flex min-h-0 flex-1 border-t border-[#8c8984]">
      <div className="flex w-[10px] shrink-0 flex-col items-center bg-[#d4d0c8]">
        <button type="button" aria-label="Cerrar" className="h-[10px] text-[7px] leading-none font-bold">✕</button>
        <div className="flex w-[8px] flex-1 items-end justify-center bg-linear-to-b from-[#c0beb9] to-[#868686] pb-px">
          <span className="rotate-180 leading-none text-[#d8d6d2] [writing-mode:vertical-rl]">Herramientas</span>
        </div>
      </div>
      <div className="flex-1 bg-white">
        <table className="w-full table-fixed border-collapse text-right">
          <colgroup>
            <col className="w-[74px]" /><col className="w-[51px]" /><col className="w-[86px]" /><col className="w-[57px]" />
            <col className="w-[57px]" /><col className="w-[57px]" /><col className="w-[57px]" /><col className="w-[56px]" />
            <col className="w-[57px]" /><col className="w-[63px]" /><col className="w-[62px]" /><col />
          </colgroup>
          <thead>
            <tr>
              <th className={clsx(head, 'text-left')}>Símbolo</th>
              <th className={clsx(head, 'text-left')}>Ticket</th>
              <th className={head}>Fecha/Hora</th>
              <th className={head}>Tipo</th>
              <th className={head}>Volumen</th>
              <th className={head}>Precio</th>
              <th className={head}>S / L</th>
              <th className={head}>T / P</th>
              <th className={head}>Precio</th>
              <th className={head}>
                <span className="flex items-center justify-end gap-[10px] pr-[2px]">
                  Beneficio
                  <span className="border-x-[2px] border-b-[3px] border-x-transparent border-b-black" />
                </span>
              </th>
              <th className={clsx(head, 'whitespace-nowrap')}>ID del experto</th>
              <th className={head}>Comentario</th>
            </tr>
          </thead>
          <tbody>
            {rows.map(([ticket, time, type, open, price, profit, comment], i) => (
              <tr key={ticket} className={clsx('h-[14px]', i === 1 && 'bg-[#ebebeb]')}>
                <td className={clsx(cell, 'pl-px text-left')}>
                  <span className="flex items-center gap-[4px]">
                    <svg viewBox="0 0 10 12" className="h-[12px] w-[10px]" aria-hidden="true">
                      <path d="M1 1h8v7l-3 3H1z" fill={i ? '#fdeae6' : '#e4f2fd'} stroke={i ? '#d8503c' : '#3d8ac8'} />
                      <path d="M3 3.500h4M3 5.500h4M3 7.500h3M9 8H6v3" fill="none" stroke={i ? '#d8503c' : '#3d8ac8'} />
                    </svg>
                    xauusd
                  </span>
                </td>
                <td className={clsx(cell, 'text-left')}>{ticket}</td>
                <td className={cell}>{time}</td>
                <td className={cell}>{type}</td>
                <td className={cell}>0.01</td>
                <td className={cell}>{open}</td>
                <td className={cell} />
                <td className={cell} />
                <td className={cell}>{price}</td>
                <td className={cell}>
                  <span className="flex items-center justify-end gap-[6px]">
                    <span className={i ? 'text-[#2828e0]' : 'text-[#d01c24]'}>{profit}</span>
                    <button type="button" aria-label="Cerrar posición" className="text-[7px] leading-none text-[#444]">✕</button>
                  </span>
                </td>
                <td className={cell}>2020</td>
                <td className="p-0 pr-[3px]">{comment}</td>
              </tr>
            ))}
            <tr className="h-[14px] bg-[#c9c9c9] font-['Open_Sans','Noto_Sans',sans-serif] font-bold">
              <td colSpan={9} className="p-0 pl-px text-left">
                <span className="flex items-center gap-[5px] whitespace-pre">
                  <svg viewBox="0 0 9 9" className="size-[9px]" aria-hidden="true">
                    <circle cx="4.500" cy="4.500" r="3.800" fill="none" stroke="#333" />
                    <path d="M2.500 4.500h4" stroke="#333" />
                  </svg>
                  {'Balance: 5 016.26 USD  Patrimonio: 5 016.02  Margen libre: 5 016.02'}
                </span>
              </td>
              <td className="p-0 pr-[16px]">-0.24</td>
              <td colSpan={2} />
            </tr>
          </tbody>
        </table>
      </div>
    </section>
  )
}

/* ---------- windows ---------- */

function BackWindow() {
  const head = clsx('h-[12px] p-0 px-[4px] font-normal', RAISED)
  const cell = 'border-r border-[#cfcdc8] p-0 px-[3px]'
  return (
    <section className="mt-[121px] flex w-[249px] shrink-0 flex-col overflow-hidden border-t border-r border-t-[#d4d0c8] border-r-[#d4d0c8] bg-[#d4d0c8] pt-[2px] shadow-[inset_0_1px_0_#fff]">
      <header className="flex h-[13px] shrink-0 items-center bg-linear-to-r from-[#858585] to-[#b8b6b1] text-[9px] font-bold text-[#d4d0c8]">mo - Hedge - [XAUUSD,M30]</header>
      <nav className="flex h-[15px] shrink-0 items-center gap-[12px] border-b border-[#99968f]">
        <button type="button">rramientas</button>
        <button type="button">Ventana</button>
        <button type="button">Ayuda</button>
      </nav>
      <div className="flex h-[22px] shrink-0 items-center border-b border-[#99968f]">
        <div className="flex w-[29px] shrink-0 items-center"><span className="w-px" /><Tool name="cast" label="Señales" /></div>
        <AlgoButton />
        <OrderButton />
        <Sep className="mr-px ml-[5px]" />
        <Tool name="bars" label="Barras" />
        <Tool name="candles" label="Velas" pressed />
        <Tool name="line" label="Línea" />
      </div>
      <div className="flex h-[22px] w-[43px] shrink-0 items-center border-r border-b border-[#77746e]">
        <Icon name="text" size={12} className="-ml-[4px]" />
        <Icon name="shapes" size={12} className="ml-[11px]" />
        <span className="ml-[3px] flex"><Caret /></span>
      </div>
      <div className="flex h-[20px] w-[34px] shrink-0 items-center gap-[11px] border-r border-[#99968f] text-[#555]"><span>1</span><span>MN</span></div>
      <div className="h-[3px] shrink-0 border-y border-[#666]" />
      <BackChart />
      <div className="h-[4px] shrink-0 border-b border-[#8c8984]" />
      <table className="w-[280px] shrink-0 table-fixed border-collapse text-right">
        <colgroup>
          <col className="w-[28px]" /><col className="w-[42px]" /><col className="w-[41px]" /><col className="w-[41px]" />
          <col className="w-[41px]" /><col className="w-[41px]" /><col />
        </colgroup>
        <thead>
          <tr>
            <th className={head}>Tipo</th>
            <th className={head}>Volumen</th>
            <th className={head}>Precio</th>
            <th className={head}>S / L</th>
            <th className={head}>T / P</th>
            <th className={head}>Precio</th>
            <th className={clsx(head, 'pl-[9px] text-left')}>B</th>
          </tr>
        </thead>
        <tbody>
          <tr className="h-[14px] bg-white">
            <td className={cell}>buy</td>
            <td className={cell}>0.01</td>
            <td className={cell}>1799.79</td>
            <td className={cell} />
            <td className="border-r border-[#cfcdc8] p-0 whitespace-nowrap">
              <span className="flex justify-between pr-[3px]">1800... <span className="text-[#555]">✕</span></span>
            </td>
            <td className={cell}>1799.24</td>
            <td className="p-0 pl-[9px] text-left text-[#d01c24]">-</td>
          </tr>
        </tbody>
      </table>
      <div className="flex h-[29px] shrink-0 justify-between bg-[#c9c9c9] pt-[2px] pr-px font-['Open_Sans','Noto_Sans',sans-serif] font-bold whitespace-pre">
        <span>{'0 171.64  Margen: 4.50  Margen libre: 50 167.14'}</span>
        <span>-</span>
      </div>
      <div className="flex-1 bg-white" />
      <nav className="mb-[3px] flex h-[15px] shrink-0 items-center border-t border-b border-t-[#333] border-b-[#99968f] text-[#555] [&>button]:h-[8px] [&>button]:border-r [&>button]:border-[#555] [&>button]:leading-[8px]">
        <button type="button" className="w-[25px] text-left">ticias</button>
        <button type="button" className="w-[40px]">Buzón <sub className="text-[7px] font-bold text-[#e01c24]">7</sub></button>
        <button type="button" className="w-[50px]">Calendario</button>
        <button type="button" className="w-[43px]">Empresa</button>
        <button type="button" className="w-[39px]">Alertas</button>
        <button type="button" className="w-[48px]">Artículos <sub className="text-[7px] font-bold text-[#e01c24]">1</sub></button>
      </nav>
    </section>
  )
}

function MainToolbar() {
  return (
    <div className="flex h-[22px] shrink-0 items-center border-t border-b border-t-white border-b-[#b3b0a9] pl-[2px]">
      <Sep className="mr-[2px]" />
      <button type="button" aria-label="Nuevo gráfico" className="flex items-center"><Icon name="newChart" /><Caret /></button>
      <button type="button" aria-label="Perfiles" className="ml-[2px] flex items-center"><Icon name="profiles" /><Caret /></button>
      <button type="button" aria-label="Cuenta" className="ml-[2px]"><Icon name="money" /></button>
      <Sep className="ml-[6px]" />
      <Tool name="book" label="Libro" />
      <Tool name="bag" label="Market" />
      <Tool name="signals" label="Señales" />
      <Tool name="vps" label="VPS" />
      <Tool name="cast" label="Transmisión" />
      <Sep className="mx-px" />
      <AlgoButton />
      <OrderButton />
      <Sep className="ml-[4px]" />
      <Tool name="bars" label="Barras" />
      <Tool name="candles" label="Velas" pressed />
      <Tool name="line" label="Línea" />
      <Sep className="mr-px" />
      <Tool name="zoomIn" label="Acercar" />
      <Tool name="zoomOut" label="Alejar" />
      <Tool name="tile" label="Mosaico" />
      <Sep className="mr-px" />
      <Tool name="autoScroll" label="Auto desplazamiento" pressed />
      <Tool name="shift" label="Desplazar gráfico" pressed />
      <span className="w-[3px]" />
      <Tool name="template" label="Plantillas" />
      <Sep /><Sep className="mx-px" />
      <span className="w-px" />
      <Tool name="cursor" label="Cursor" pressed />
      <Tool name="cross" label="Cruz" />
      <Sep className="mr-px" />
      <Tool name="vline" label="Línea vertical" />
      <Tool name="hline" label="Línea horizontal" />
      <Tool name="trend" label="Línea de tendencia" />
      <button type="button" aria-label="Fibonacci"><Icon name="fibo" /></button>
      <button type="button" aria-label="Buscar" className="ml-px"><Icon name="search" /></button>
      <button type="button" aria-label="Notificaciones" className="ml-[7px]">
        <svg viewBox="0 0 18 14" className="h-[14px] w-[18px]" aria-hidden="true">
          <circle cx="6" cy="7" r="5.500" fill="none" stroke="#333" />
          <circle cx="6" cy="7" r="2.500" fill="none" stroke="#333" />
          <circle cx="12" cy="6" r="6" fill="#e23a28" />
          <text x="12" y="9" fontSize="8" fill="#fff" textAnchor="middle">2</text>
        </svg>
      </button>
      <button type="button" aria-label="Nivel" className="ml-[6px]">
        <svg viewBox="0 0 14 14" className="h-[14px] w-[14px]" aria-hidden="true">
          <path d="M1 8a6 6 0 0 1 12 0" fill="none" stroke="#2fb52f" strokeWidth="1.500" />
          <path d="M7 3 4.500 6h1.700v2.500h1.600V6h1.700z" fill="#2fb52f" />
          <text x="7" y="13.500" fontSize="5" fontWeight="700" fill="#2fb52f" textAnchor="middle">LVL</text>
        </svg>
      </button>
      <div className="ml-[5px] flex h-[11px] w-[26px] shrink-0 border border-[#b5b2ab] bg-white"><span className="w-[4px] bg-[#4ade40]" /></div>
    </div>
  )
}

function FrontWindow() {
  return (
    <section className="flex min-w-0 flex-1 flex-col border-x-2 border-l-[#e8eef0] border-r-[#a9a69f] bg-[#d4d0c8]">
      <div className="flex h-[4px] shrink-0 justify-between overflow-hidden">
        <span className="ml-[4px] h-[2px] w-[9px] bg-[#4a9ad8]" />
        <span className="flex h-[2px] items-end gap-[6px] pr-[8px]">
          <span className="w-[6px] border-b border-[#888]" />
          <span className="h-[2px] w-[6px] border-x border-b border-[#888]" />
          <span className="h-[2px] w-[6px] border-x border-[#888]" />
        </span>
      </div>
      <MainToolbar />
      <div className="flex h-[21px] shrink-0 items-center pl-[2px] text-[#555]">
        <Sep className="mr-[2px]" />
        <div className="flex h-[18px] w-[203px]">
          {TIMEFRAMES.map((tf, i) => (
            <button key={tf} type="button" className={clsx('flex-1', i === 0 && PRESSED)}>{tf}</button>
          ))}
        </div>
        <Sep />
      </div>
      <div className="flex h-[509px] shrink-0 border-b border-[#99968f] pr-px pb-[4px]">
        <aside className="flex w-[171px] shrink-0 flex-col gap-[3px] pt-px pl-px">
          <MarketWatch />
          <Navigator />
        </aside>
        <div className="relative ml-[3px] flex min-w-0 flex-1 border-t-2 border-l-2 border-[#77746e] bg-white">
          <MainChart />
          <PriceAxis />
          <TradePanel />
          <OrderTags />
          <Alert className="top-[92px]" />
          <Alert className="top-[107px]" />
          <Alert className="top-[119px]" />
          <Alert className="top-[328px]" />
        </div>
      </div>
      <Toolbox />
    </section>
  )
}

export default function App() {
  return (
    <main className="flex h-screen w-full overflow-hidden bg-[#3a6ea5] font-['Roboto',sans-serif] text-[8px] leading-[10px] text-[#1a1a1a] [text-rendering:geometricPrecision]">
      <BackWindow />
      <FrontWindow />
    </main>
  )
}
